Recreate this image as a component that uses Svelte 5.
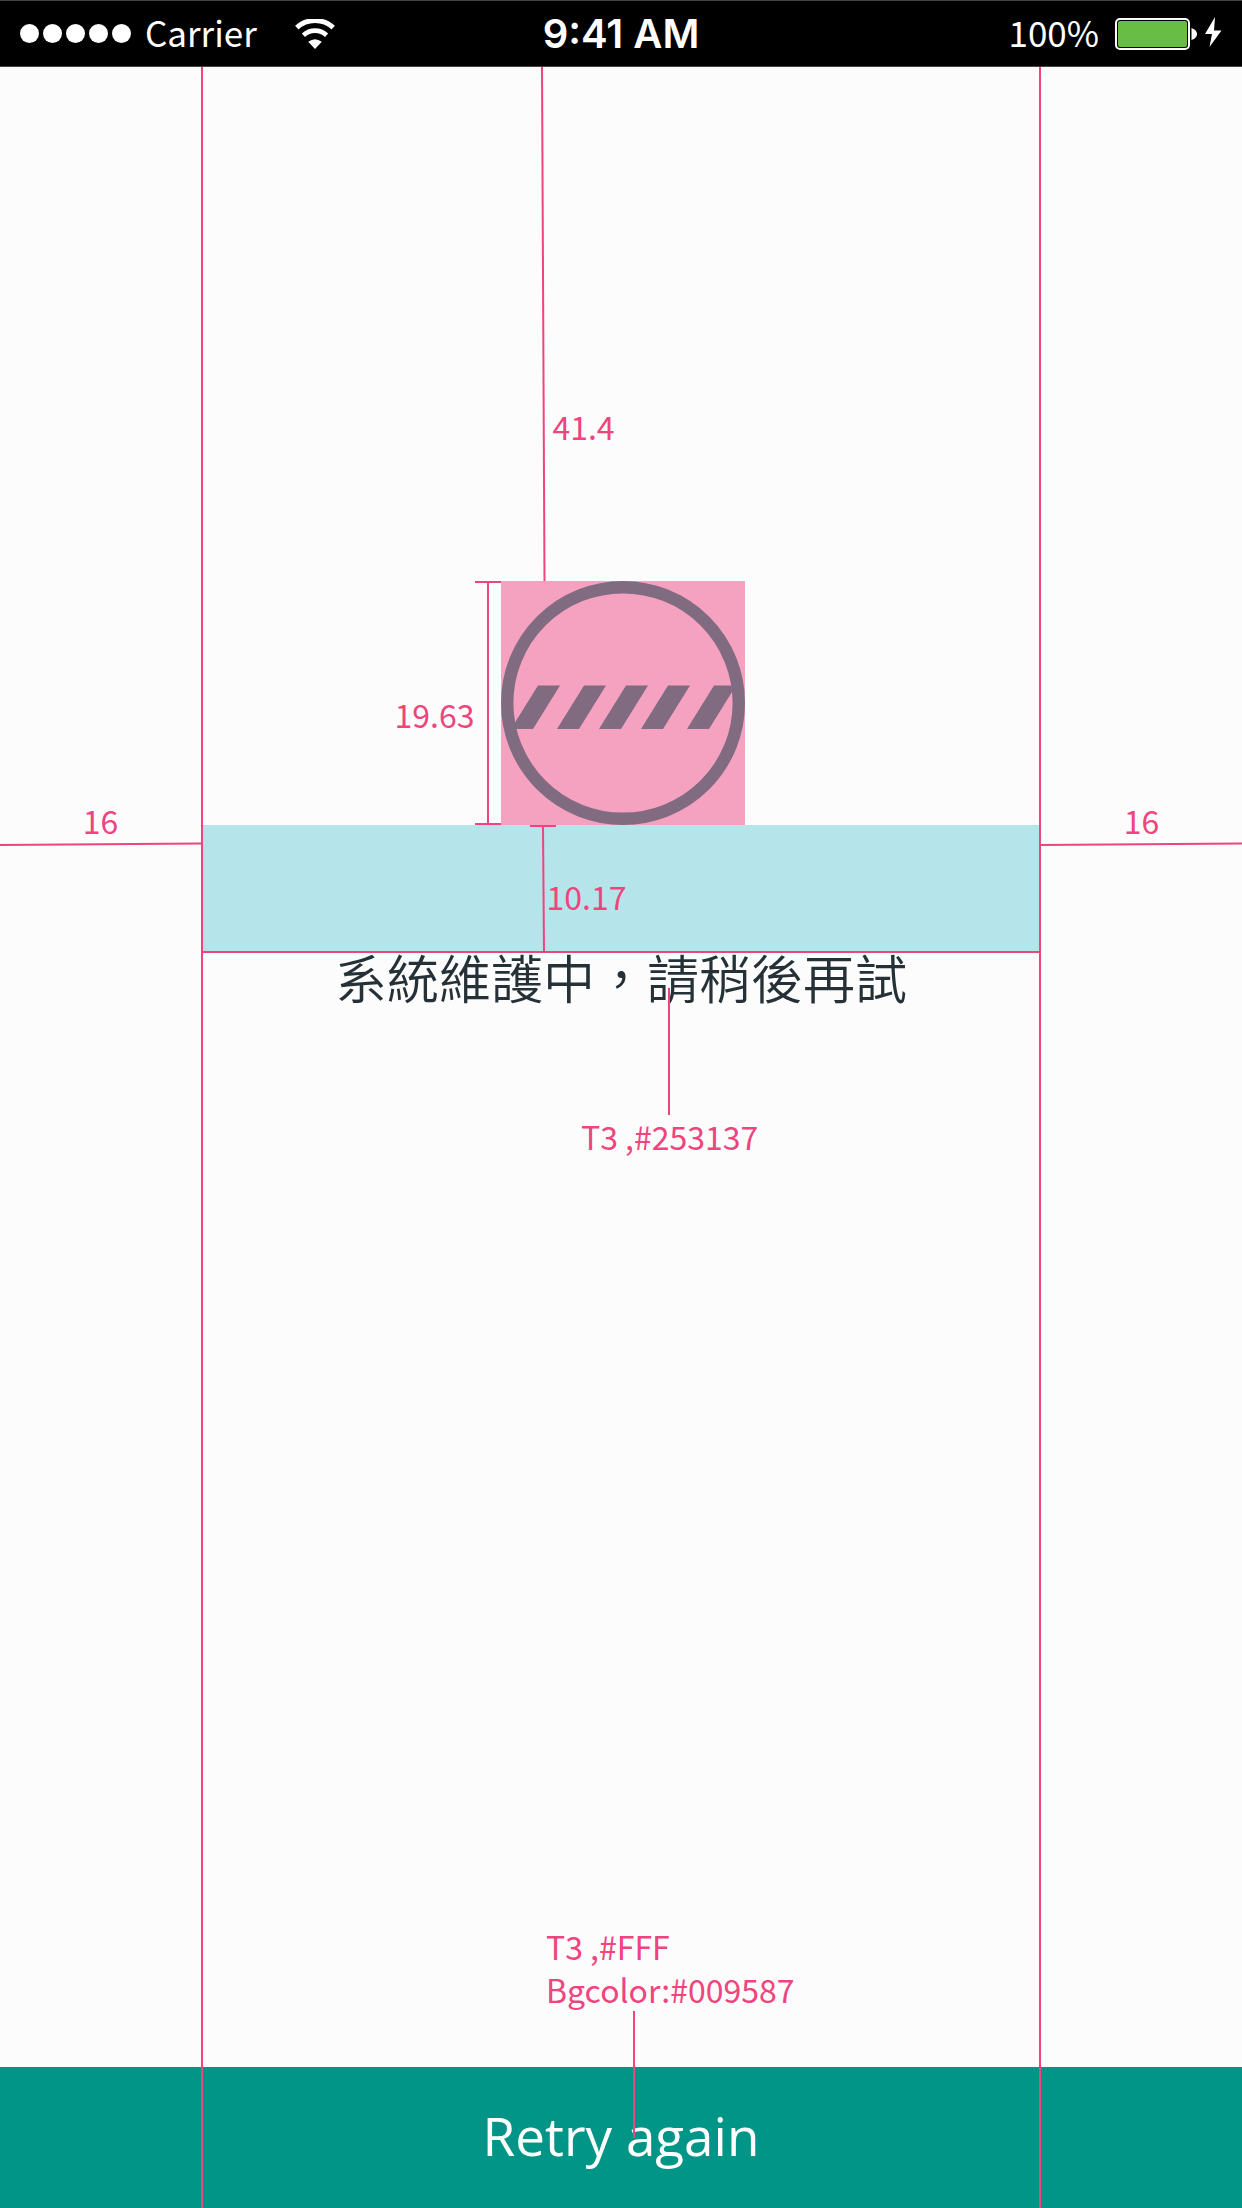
<script>
  const dots = [0, 1, 2, 3, 4];
  const stripes = [0, 46, 88, 130, 176];
</script>

<div class="screen">
  <header class="status">
    <div class="side">
      <div class="signal">
        {#each dots as dot (dot)}<i class="dot"></i>{/each}
      </div>
      <span class="carrier">Carrier</span>
      <svg class="wifi" viewBox="0 0 40 30" aria-label="Wi-Fi">
        <path d="M1.8 8.6 A27 27 0 0 1 38.2 8.6" fill="none" stroke="#fff" stroke-width="5" />
        <path d="M8.4 16.2 A17 17 0 0 1 31.6 16.2" fill="none" stroke="#fff" stroke-width="4.6" />
        <path d="M13.2 22.8 Q20 17.6 26.8 22.8 L20 30 Z" fill="#fff" />
      </svg>
    </div>
    <time class="clock">9:41 AM</time>
    <div class="side end">
      <span class="carrier">100%</span>
      <svg class="battery" viewBox="0 0 107 34" aria-label="Battery charging">
        <rect x="1" y="2" width="73" height="30" rx="4" fill="none" stroke="#fff" stroke-width="2" />
        <rect x="3" y="4" width="69" height="26" rx="2" fill="#68bd45" />
        <path d="M76.500 11 Q82 13 82 17 Q82 21 76.500 23 Z" fill="#fff" />
        <path d="M100 0 L90 17 L97 17 L94.500 30 L106.500 13.500 L99 13.500 Z" fill="#fff" />
      </svg>
    </div>
  </header>

  <main class="content">
    <section class="above">
      <svg class="ruler" viewBox="0 0 6 514" preserveAspectRatio="none"><path d="M1 0 L3.500 514" /></svg>
      <span class="note rise">41.4</span>
    </section>

    <section class="figure">
      <div class="height-mark">
        <span class="note">19.63</span>
        <span class="bracket"></span>
      </div>
      <svg class="barrier" viewBox="0 0 244 244" aria-label="Under maintenance">
        <rect width="244" height="244" fill="#f5a1c0" />
        <clipPath id="disc"><circle cx="122" cy="122" r="116" /></clipPath>
        <g clip-path="url(#disc)" fill="#806b80">
          {#each stripes as x (x)}
            <path d="M{x + 37} 104.500 h22 l-27 43.500 h-22 Z" />
          {/each}
        </g>
        <circle cx="122" cy="122" r="115.800" fill="none" stroke="#806b80" stroke-width="12.400" />
      </svg>
    </section>

    <section class="gap-row">
      <div class="margin"><span class="note">16</span>
        <svg class="slope" viewBox="0 0 200 4" preserveAspectRatio="none"><path d="M0 3 L200 1.500" /></svg>
      </div>
      <div class="band">
        <svg class="ruler" viewBox="0 0 28 126"><path d="M1 1 H27 M14 1 L15 126" /></svg>
        <span class="note">10.17</span>
      </div>
      <div class="margin"><span class="note">16</span>
        <svg class="slope" viewBox="0 0 200 4" preserveAspectRatio="none"><path d="M0 3 L200 1.500" /></svg>
      </div>
    </section>

    <h1 class="message" lang="zh-Hant">系統維護中，請稍後再試
      <span class="callout text-callout" lang="en">
        <i class="stem"></i>
        <span class="note">T3 ,#253137</span>
      </span>
    </h1>
  </main>

  <footer class="footer">
    <div class="callout button-callout">
      <span class="note">T3 ,#FFF</span>
      <span class="note">Bgcolor:#009587</span>
      <i class="stem"></i>
    </div>
    <button class="retry" type="button">Retry again</button>
  </footer>
  <div class="guides"></div>
</div>

<style>
  :global(body) {
    margin: 0;
    background: #fcfcfc;
  }
  .screen {
    --pink: #ef447d;
    --margin: 201px;
    position: relative;
    display: flex;
    flex-direction: column;
    min-height: 100vh;
    font-family: "Noto Sans CJK TC", "Noto Sans", sans-serif;
  }
  .status {
    display: grid;
    grid-template-columns: 1fr auto 1fr;
    align-items: center;
    box-sizing: border-box;
    height: 67px;
    padding: 0 20px;
    border: solid #444;
    border-width: 1px 0;
    background: #000;
    color: #fff;
  }
  .side {
    display: flex;
    align-items: center;
  }
  .end {
    justify-content: flex-end;
  }
  .signal {
    display: flex;
    gap: 4px;
    margin-right: 14px;
  }
  .dot {
    width: 19px;
    height: 19px;
    border-radius: 50%;
    background: #fff;
  }
  .carrier {
    padding-bottom: 3px;
    font-size: 35px;
    line-height: 40px;
  }
  .wifi {
    width: 40px;
    height: 30px;
    margin-left: 38px;
  }
  .clock {
    font: 600 40px/48px Inter, sans-serif;
  }
  .battery {
    width: 107px;
    height: 34px;
    margin-left: 16px;
  }
  .content {
    flex: 1;
  }
  .note {
    color: var(--pink);
    font-size: 32px;
    line-height: 43px;
    white-space: nowrap;
  }
  .above {
    display: flex;
    align-items: center;
    justify-content: center;
    gap: 5px;
    height: 514px;
    padding-right: 86px;
  }
  .above .note {
    padding-top: 205px;
  }
  .ruler {
    flex: none;
    fill: none;
    stroke: var(--pink);
    stroke-width: 2;
  }
  .above .ruler {
    width: 6px;
    height: 514px;
  }
  .figure {
    display: grid;
    grid-template-columns: 1fr 244px 1fr;
    padding-left: 3px;
  }
  .barrier {
    width: 244px;
    height: 244px;
  }
  .height-mark {
    display: flex;
    align-items: center;
    justify-content: flex-end;
  }
  .height-mark .note {
    padding-top: 22px;
  }
  .bracket {
    box-sizing: border-box;
    width: 26px;
    height: 244px;
    border: solid var(--pink);
    border-width: 2px 0;
    background: linear-gradient(var(--pink), var(--pink)) center / 2px 100% no-repeat;
  }
  .gap-row {
    display: grid;
    grid-template-columns: var(--margin) 1fr var(--margin);
    height: 128px;
  }
  .band {
    display: flex;
    align-items: center;
    box-sizing: border-box;
    border-bottom: 2px solid var(--pink);
    background: #b5e4eb;
    padding-left: 39%;
  }
  .band .ruler {
    width: 28px;
    height: 126px;
  }
  .band .note {
    margin-left: -10px;
    padding-top: 16px;
  }
  .margin {
    display: flex;
    flex-direction: column;
    align-items: center;
    height: 47px;
    margin-top: -26px;
  }
  .slope {
    width: 100%;
    height: 4px;
    fill: none;
    stroke: var(--pink);
    stroke-width: 2;
  }
  .message {
    position: relative;
    margin: 0;
    color: #253137;
    font-size: 52px;
    font-weight: 350;
    line-height: 48px;
    text-align: center;
  }
  .callout {
    position: absolute;
    display: flex;
    flex-direction: column;
    align-items: flex-start;
  }
  .callout .note {
    font-weight: 400;
  }
  .stem {
    width: 2px;
    height: 127px;
    margin-left: 87px;
    background: var(--pink);
  }
  .text-callout {
    top: 35px;
    left: calc(50% - 40px);
  }
  .button-callout {
    bottom: 70px;
    left: calc(50% - 75px);
    pointer-events: none;
  }
  .footer {
    position: relative;
  }
  .retry {
    display: block;
    width: 100%;
    height: 141px;
    padding: 0 0 4px;
    border: 0;
    background: #009587;
    color: #fff;
    font: 400 53px/72px "Open Sans", sans-serif;
    cursor: pointer;
  }
  .guides {
    position: absolute;
    inset: 67px var(--margin) 0;
    border: solid var(--pink);
    border-width: 0 2px;
    pointer-events: none;
  }
</style>
